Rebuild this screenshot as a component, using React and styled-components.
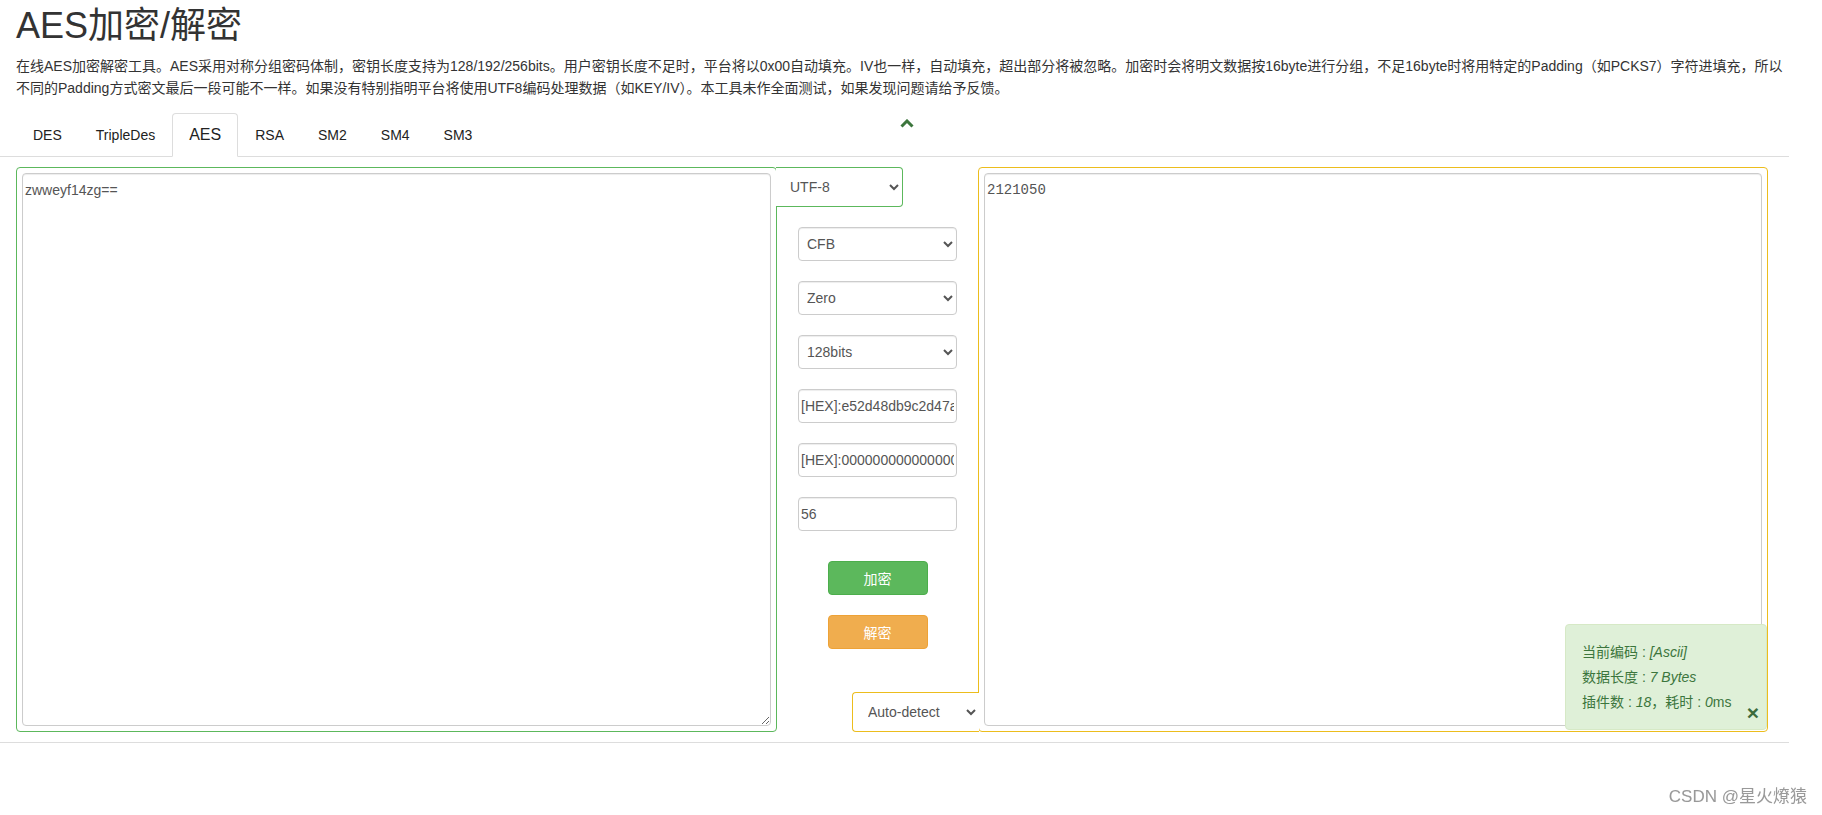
import React from 'react'
import styled, { createGlobalStyle } from 'styled-components'

const GlobalStyle = createGlobalStyle`
  body {
    margin: 0;
    background: #fff;
    color: #333;
    font-family: "Liberation Sans", Arial, "Noto Sans CJK SC", sans-serif;
  }
`

const GREEN = '#5cb85c'
const YELLOW = '#ecbd1d'

const Page = styled.div`
  width: 1789px;
  min-height: 815px;
`

const Header = styled.div`
  padding: 6px 4px 0 16px;
`

const Title = styled.h1`
  margin: 0;
  font-size: 36px;
  font-weight: 400;
  line-height: 40px;
  color: #333;
`

const Desc = styled.p`
  margin: 9px 0 0;
  font-size: 14px;
  line-height: 22px;
  color: #333;
`

const Nav = styled.div`
  position: relative;
  display: flex;
  margin-top: 14px;
  padding-left: 16px;
  border-bottom: 1px solid #ddd;
`

const Tab = styled.div`
  padding: 10px 16px;
  margin-bottom: -1px;
  font-size: ${p => (p.$active ? '16px' : '14px')};
  line-height: 22px;
  color: #222;
  border: 1px solid ${p => (p.$active ? '#ddd' : 'transparent')};
  border-bottom-color: ${p => (p.$active ? '#fff' : 'transparent')};
  border-radius: 4px 4px 0 0;
  background: ${p => (p.$active ? '#fff' : 'transparent')};
  cursor: pointer;
`

const Toggle = styled.span`
  position: absolute;
  left: 900px;
  top: 6px;
  display: flex;
`

const Main = styled.div`
  display: flex;
  margin-top: 10px;
  padding-left: 16px;
  height: 565px;
`

const Panel = styled.div`
  position: relative;
  box-sizing: border-box;
  width: ${p => p.$w}px;
  display: flex;
  padding: 5px;
  border: 1px solid ${p => p.$color};
  border-radius: 4px;
`

const TextBox = styled.textarea`
  flex: 1;
  margin: 0;
  padding: 6px 2px;
  border: 1px solid #ccc;
  border-radius: 4px;
  box-shadow: inset 0 1px 1px rgba(0, 0, 0, 0.075);
  font-family: ${p => (p.$mono ? '"Liberation Mono", "Courier New", monospace' : '"Liberation Sans", Arial, sans-serif')};
  font-size: 14px;
  line-height: 20px;
  color: #555;
  outline: none;
`

const AttachedSelect = styled.select`
  position: absolute;
  box-sizing: border-box;
  width: 127px;
  height: 40px;
  bottom: ${p => (p.$side === 'left' ? '-1px' : 'auto')};
  top: ${p => (p.$side === 'right' ? '-1px' : 'auto')};
  left: ${p => (p.$side === 'right' ? '100%' : 'auto')};
  right: ${p => (p.$side === 'left' ? '100%' : 'auto')};
  padding: 0 8px 0 ${p => (p.$side === 'left' ? '11px' : '10px')};
  background: #fff;
  border: 1px solid ${p => p.$color};
  border-left: ${p => (p.$side === 'right' ? 'none' : `1px solid ${p.$color}`)};
  border-right: ${p => (p.$side === 'left' ? 'none' : `1px solid ${p.$color}`)};
  border-radius: ${p => (p.$side === 'right' ? '0 4px 4px 0' : '4px 0 0 4px')};
  font-family: "Liberation Sans", Arial, sans-serif;
  font-size: 14px;
  color: #555;
  outline: none;
`

const Middle = styled.div`
  width: 201px;
  display: flex;
  flex-direction: column;
  align-items: center;
  gap: 20px;
  padding-top: 60px;
`

const Select = styled.select`
  box-sizing: border-box;
  width: 159px;
  height: 34px;
  padding: 6px 4px;
  background: #fff;
  border: 1px solid #ccc;
  border-radius: 4px;
  box-shadow: inset 0 1px 1px rgba(0, 0, 0, 0.075);
  font-family: "Liberation Sans", Arial, sans-serif;
  font-size: 14px;
  color: #555;
  outline: none;
`

const Input = styled.input`
  box-sizing: border-box;
  width: 159px;
  height: 34px;
  padding: 6px 2px;
  border: 1px solid #ccc;
  border-radius: 4px;
  box-shadow: inset 0 1px 1px rgba(0, 0, 0, 0.075);
  font-family: "Liberation Sans", Arial, sans-serif;
  font-size: 14px;
  color: #555;
  outline: none;
`

const Button = styled.button`
  box-sizing: border-box;
  width: 100px;
  height: 34px;
  margin-top: ${p => p.$mt || 0}px;
  border: 1px solid ${p => (p.$kind === 'warn' ? '#eea236' : '#4cae4c')};
  border-radius: 4px;
  background: ${p => (p.$kind === 'warn' ? '#f0ad4e' : '#5cb85c')};
  color: #fff;
  font-family: "Liberation Sans", Arial, "Noto Sans CJK SC", sans-serif;
  font-size: 14px;
  cursor: pointer;
`

const Info = styled.div`
  position: absolute;
  right: 0;
  bottom: 1px;
  box-sizing: border-box;
  width: 202px;
  height: 106px;
  padding: 15px 16px;
  background: #dff0d8;
  border: 1px solid #d6e9c6;
  border-radius: 4px;
  color: #3c763d;
  font-size: 14px;
  line-height: 25px;
  em {
    font-style: italic;
  }
`

const Close = styled.span`
  position: absolute;
  right: 7px;
  bottom: 6px;
  font-size: 21px;
  font-weight: 700;
  line-height: 1;
  color: #3c6b3c;
`

const Divider = styled.div`
  margin-top: 10px;
  border-top: 1px solid #ddd;
`

const Watermark = styled.div`
  position: fixed;
  right: 15px;
  bottom: 8px;
  font-size: 17px;
  color: #999;
  text-shadow: 0 0 1px rgba(0, 0, 0, 0.08);
`

const tabs = ['DES', 'TripleDes', 'AES', 'RSA', 'SM2', 'SM4', 'SM3']

export default function App() {
  return (
    <Page>
      <GlobalStyle />
      <Header>
        <Title>AES加密/解密</Title>
        <Desc>
          在线AES加密解密工具。AES采用对称分组密码体制，密钥长度支持为128/192/256bits。用户密钥长度不足时，平台将以0x00自动填充。IV也一样，自动填充，超出部分将被忽略。加密时会将明文数据按16byte进行分组，不足16byte时将用特定的Padding（如PCKS7）字符进填充，所以不同的Padding方式密文最后一段可能不一样。如果没有特别指明平台将使用UTF8编码处理数据（如KEY/IV）。本工具未作全面测试，如果发现问题请给予反馈。
        </Desc>
      </Header>

      <Nav>
        {tabs.map(t => (
          <Tab key={t} $active={t === 'AES'}>{t}</Tab>
        ))}
        <Toggle>
          <svg width="14" height="9" viewBox="0 0 14 9">
            <path d="M1.5 7.5 L7 2 L12.5 7.5" fill="none" stroke="#3c763d" strokeWidth="3" />
          </svg>
        </Toggle>
      </Nav>

      <Main>
        <Panel $w={761} $color={GREEN}>
          <TextBox defaultValue="zwweyf14zg==" />
          <AttachedSelect $side="right" $color={GREEN} defaultValue="UTF-8">
            <option>UTF-8</option>
            <option>GBK</option>
          </AttachedSelect>
        </Panel>

        <Middle>
          <Select defaultValue="CFB">
            <option>CBC</option>
            <option>ECB</option>
            <option>CFB</option>
          </Select>
          <Select defaultValue="Zero">
            <option>Pkcs7</option>
            <option>Zero</option>
          </Select>
          <Select defaultValue="128bits">
            <option>128bits</option>
            <option>192bits</option>
            <option>256bits</option>
          </Select>
          <Input defaultValue="[HEX]:e52d48db9c2d47a1f0b3" />
          <Input defaultValue="[HEX]:00000000000000000000" />
          <Input defaultValue="56" />
          <Button $mt={10}>加密</Button>
          <Button $kind="warn">解密</Button>
        </Middle>

        <Panel $w={790} $color={YELLOW}>
          <TextBox $mono defaultValue="2121050" />
          <AttachedSelect $side="left" $color={YELLOW} defaultValue="Auto-detect">
            <option>Auto-detect</option>
            <option>Hex</option>
            <option>Base64</option>
          </AttachedSelect>
          <Info>
            <div>当前编码 : <em>[Ascii]</em></div>
            <div>数据长度 : <em>7 Bytes</em></div>
            <div>插件数 : <em>18</em>，耗时 : <em>0</em>ms</div>
            <Close>×</Close>
          </Info>
        </Panel>
      </Main>

      <Divider />
      <Watermark>CSDN @星火燎猿</Watermark>
    </Page>
  )
}
